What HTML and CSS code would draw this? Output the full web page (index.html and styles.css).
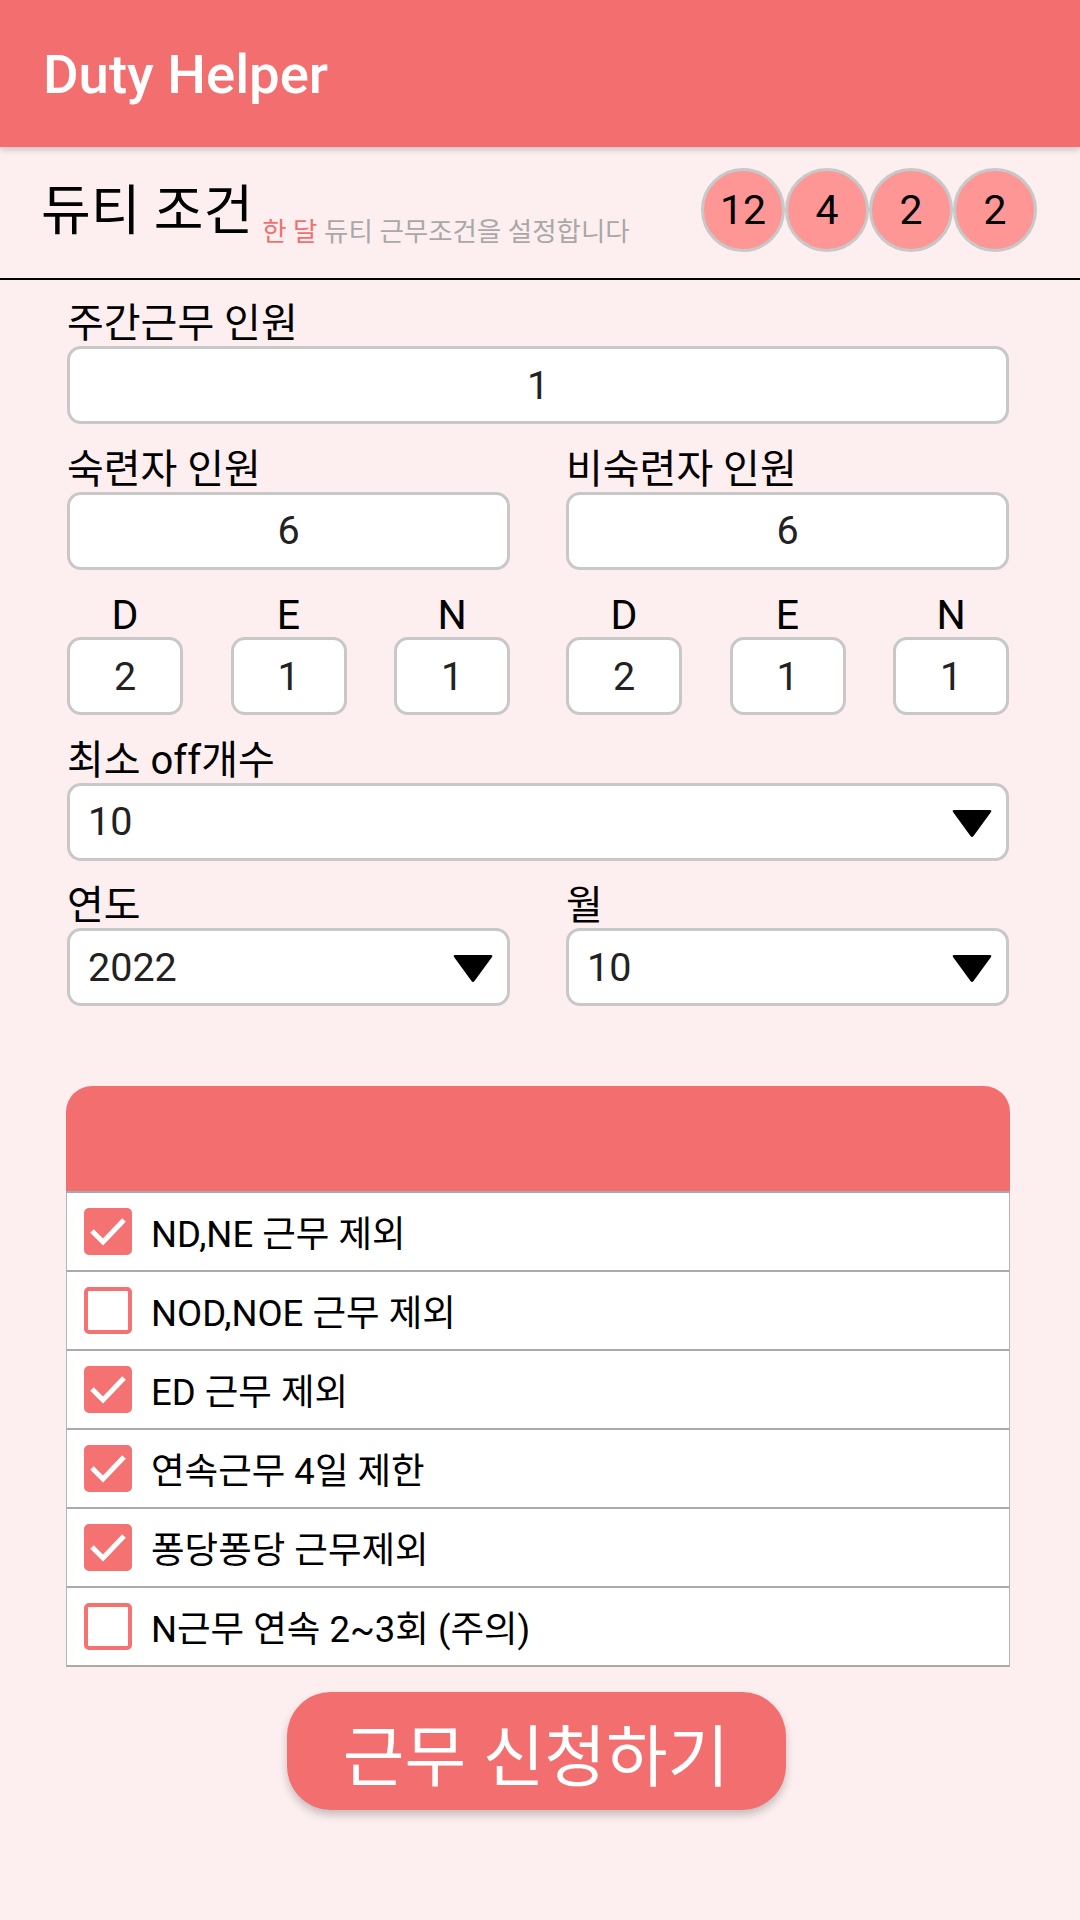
FILE: index.html
```html
<!DOCTYPE html>
<html lang="ko">
<head>
<meta charset="utf-8">
<title>Duty Helper</title>
<link rel="stylesheet" href="styles.css">
</head>
<body>
<header class="appbar"><span class="appbar-title">Duty Helper</span></header>

<section class="headline">
  <div class="headline-text">
    <h1 class="headline-title">듀티 조건</h1>
    <span class="headline-sub"><em class="accent">한 달</em> 듀티 근무조건을 설정합니다</span>
  </div>
  <div class="counts">
    <span class="count">12</span>
    <span class="count">4</span>
    <span class="count">2</span>
    <span class="count">2</span>
  </div>
</section>

<main class="form">
  <div class="field">
    <label class="label">주간근무 인원</label>
    <div class="box num">1</div>
  </div>

  <div class="row2">
    <div class="field">
      <label class="label">숙련자 인원</label>
      <div class="box num">6</div>
    </div>
    <div class="field">
      <label class="label">비숙련자 인원</label>
      <div class="box num">6</div>
    </div>
  </div>

  <div class="row2 shifts-row">
    <div class="shifts">
      <div class="shift"><span class="shift-label">D</span><div class="box num small">2</div></div>
      <div class="shift"><span class="shift-label">E</span><div class="box num small">1</div></div>
      <div class="shift"><span class="shift-label">N</span><div class="box num small">1</div></div>
    </div>
    <div class="shifts">
      <div class="shift"><span class="shift-label">D</span><div class="box num small">2</div></div>
      <div class="shift"><span class="shift-label">E</span><div class="box num small">1</div></div>
      <div class="shift"><span class="shift-label">N</span><div class="box num small">1</div></div>
    </div>
  </div>

  <div class="field">
    <label class="label">최소 off개수</label>
    <div class="box select"><span>10</span><svg class="caret" viewBox="0 0 42 30" width="42" height="30"><path d="M3 2 L39 2 Q41 2 40 4 L22.5 28 Q21 30 19.5 28 L2 4 Q1 2 3 2 Z" fill="#000"/></svg></div>
  </div>

  <div class="row2">
    <div class="field">
      <label class="label">연도</label>
      <div class="box select"><span>2022</span><svg class="caret" viewBox="0 0 42 30" width="42" height="30"><path d="M3 2 L39 2 Q41 2 40 4 L22.5 28 Q21 30 19.5 28 L2 4 Q1 2 3 2 Z" fill="#000"/></svg></div>
    </div>
    <div class="field">
      <label class="label">월</label>
      <div class="box select"><span>10</span><svg class="caret" viewBox="0 0 42 30" width="42" height="30"><path d="M3 2 L39 2 Q41 2 40 4 L22.5 28 Q21 30 19.5 28 L2 4 Q1 2 3 2 Z" fill="#000"/></svg></div>
    </div>
  </div>

  <div class="card">
    <div class="card-head"></div>
    <div class="opt"><span class="cb on"><svg viewBox="0 0 48 46" width="48" height="46"><path d="M8 23 L19 34 L40 12" fill="none" stroke="#fff" stroke-width="5"/></svg></span><span class="opt-text">ND,NE 근무 제외</span></div>
    <div class="opt"><span class="cb"></span><span class="opt-text">NOD,NOE 근무 제외</span></div>
    <div class="opt"><span class="cb on"><svg viewBox="0 0 48 46" width="48" height="46"><path d="M8 23 L19 34 L40 12" fill="none" stroke="#fff" stroke-width="5"/></svg></span><span class="opt-text">ED 근무 제외</span></div>
    <div class="opt"><span class="cb on"><svg viewBox="0 0 48 46" width="48" height="46"><path d="M8 23 L19 34 L40 12" fill="none" stroke="#fff" stroke-width="5"/></svg></span><span class="opt-text">연속근무 4일 제한</span></div>
    <div class="opt"><span class="cb on"><svg viewBox="0 0 48 46" width="48" height="46"><path d="M8 23 L19 34 L40 12" fill="none" stroke="#fff" stroke-width="5"/></svg></span><span class="opt-text">퐁당퐁당 근무제외</span></div>
    <div class="opt"><span class="cb"></span><span class="opt-text">N근무 연속 2~3회 (주의)</span></div>
  </div>

  <div class="actions"><button class="submit" type="button">근무 신청하기</button></div>
</main>
</body>
</html>
```

FILE: styles.css
```css
* { box-sizing: border-box; }
html, body { margin: 0; padding: 0; }
body {
  width: 1080px;
  height: 1920px;
  background: #fdefef;
  font-family: Roboto, "Noto Sans CJK KR", sans-serif;
  color: #000;
  overflow: hidden;
}

.appbar {
  height: 147px;
  background: #f36f6f;
  display: flex;
  align-items: center;
  padding-left: 43px;
  box-shadow: 0 3px 6px rgba(0,0,0,0.18);
  position: relative;
  z-index: 1;
}
.appbar-title {
  color: #fff;
  font-size: 54.5px;
  font-weight: 500;
  line-height: 1;
  margin-top: 2px;
}

.headline {
  height: 133px;
  border-bottom: 2px solid #000;
  display: flex;
  align-items: center;
  justify-content: space-between;
  padding: 0 43px 0 41px;
}
.headline-text {
  display: flex;
  align-items: flex-end;
  margin-top: -2px;
}
.headline-title {
  margin: 0;
  font-size: 54px;
  font-weight: 400;
  line-height: 64px;
}
.headline-sub {
  font-size: 26.5px;
  line-height: 32px;
  color: #a8a8a8;
  margin-left: 9px;
  margin-bottom: -4px;
}
.accent { font-style: normal; color: #f36f6f; }

.counts { display: flex; margin-top: -6px; }
.count {
  width: 84px;
  height: 84px;
  border-radius: 50%;
  background: #ff9696;
  border: 3px solid #c8c8c8;
  display: flex;
  align-items: center;
  justify-content: center;
  font-size: 41px;
  color: #000;
}

.form {
  padding: 22px 71px 0 67px;
}
.field { display: flex; flex-direction: column; }
.row2 {
  display: grid;
  grid-template-columns: 1fr 1fr;
  column-gap: 56px;
  margin-top: 23.5px;
}
.form > .field { margin-top: 23.5px; }
.form > .field:first-child { margin-top: 0; }

.label {
  font-size: 40px;
  line-height: 44px;
  height: 44px;
}
.box {
  height: 78px;
  background: #fff;
  border: 3px solid #c8c8c8;
  border-radius: 14px;
  font-size: 39.5px;
  color: #222;
}
.num {
  display: flex;
  align-items: center;
  justify-content: center;
}
.select {
  display: flex;
  align-items: center;
  justify-content: space-between;
  padding: 0 13px 0 18px;
}
.caret { display: block; margin-top: 2px; }

.shifts-row { margin-top: 23.5px; }
.shifts {
  display: flex;
  justify-content: space-between;
}
.shift {
  width: 116px;
  display: flex;
  flex-direction: column;
  align-items: center;
}
.shift-label {
  font-size: 41px;
  line-height: 44px;
  height: 44px;
}
.small { width: 116px; }

.card {
  margin: 80px -1px 0 -1px;
  border-radius: 26px 26px 0 0;
  overflow: hidden;
}
.card-head {
  height: 107px;
  background: #f36f6f;
  border-bottom: 2px solid #aaa;
}
.opt {
  height: 79px;
  background: #fff;
  border-left: 1.5px solid #b5b5b5;
  border-right: 1.5px solid #b5b5b5;
  border-bottom: 2px solid #aaa;
  display: flex;
  align-items: center;
  padding-left: 17px;
}
.cb {
  width: 48px;
  height: 47px;
  border-radius: 5px;
  border: 4px solid #f47272;
  background: #fff;
  flex: none;
  position: relative;
}
.cb.on { background: #f47272; border: none; }
.cb svg { display: block; }
.opt-text {
  font-size: 36.5px;
  margin-left: 19px;
  color: #000;
}

.actions {
  display: flex;
  justify-content: center;
  margin-top: 25px;
}
.submit {
  width: 499px;
  height: 118px;
  border: none;
  border-radius: 44px;
  background: #f36f6f;
  color: #fff;
  font-family: Roboto, "Noto Sans CJK KR", sans-serif;
  font-size: 67px;
  box-shadow: 0 5px 8px rgba(0,0,0,0.22);
  margin-left: -4px;
}
```
